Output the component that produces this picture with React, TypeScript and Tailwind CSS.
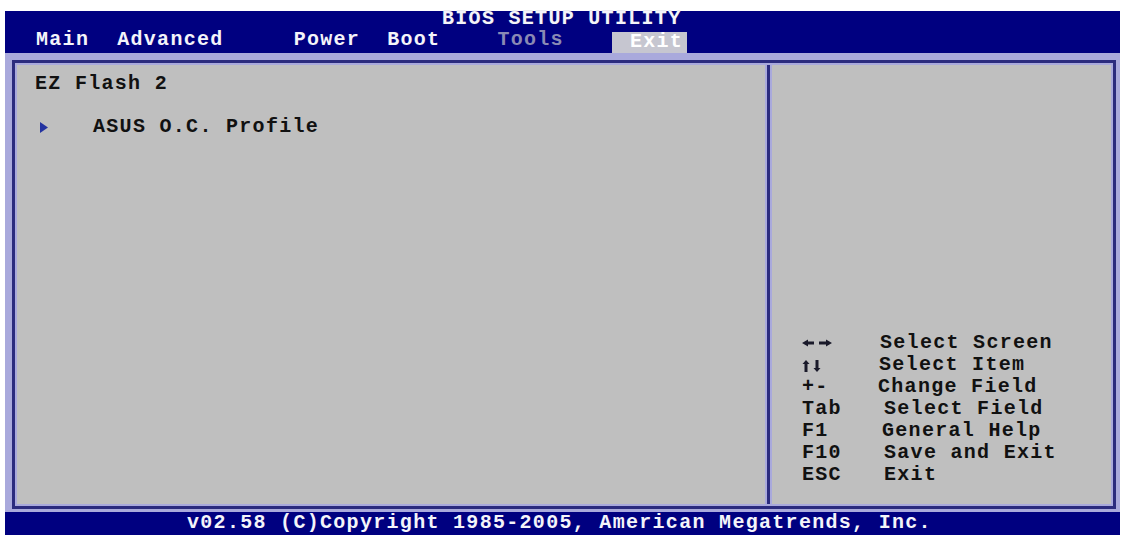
import React from "react";

const font = "font-['Liberation_Mono','DejaVu_Sans_Mono',monospace] font-bold text-[20px] tracking-[1.3px]";

function LR() {
  return (
    <svg width="30" height="8" viewBox="0 0 30 8" className="mt-[7px]">
      <path d="M0 4 L6 0.5 L6 2.5 L12 2.5 L12 5.5 L6 5.5 L6 7.5 Z" fill="#1a1a2a" />
      <path d="M30 4 L24 0.5 L24 2.5 L17 2.5 L17 5.5 L24 5.5 L24 7.5 Z" fill="#1a1a2a" />
    </svg>
  );
}

function UD() {
  return (
    <svg width="20" height="12" viewBox="0 0 20 12" className="mt-[6px]">
      <path d="M4 0 L7.5 4 L5.5 4 L5.5 12 L2.5 12 L2.5 4 L0.5 4 Z" fill="#1a1a2a" />
      <path d="M15 12 L18.5 8 L16.5 8 L16.5 0 L13.5 0 L13.5 8 L11.5 8 Z" fill="#1a1a2a" />
    </svg>
  );
}

const help: { key: React.ReactNode; desc: string; ml: string }[] = [
  { key: <LR />, desc: "Select Screen", ml: "ml-[2px]" },
  { key: <UD />, desc: "Select Item", ml: "ml-[1px]" },
  { key: "+-", desc: "Change Field", ml: "ml-[0px]" },
  { key: "Tab", desc: "Select Field", ml: "ml-[6px]" },
  { key: "F1", desc: "General Help", ml: "ml-[4px]" },
  { key: "F10", desc: "Save and Exit", ml: "ml-[6px]" },
  { key: "ESC", desc: "Exit", ml: "ml-[6px]" },
];

export default function App() {
  return (
    <div className={`w-[1123px] h-[535px] bg-white pt-[11px] pl-[5px] overflow-hidden ${font}`}>
      <div className="w-[1115px] flex flex-col">
        {/* Header */}
        <div className="h-[42px] bg-[#000080] text-[#f4f4fa] flex flex-col">
          <div className="-mt-[2px] h-5 leading-5 pl-[437px] whitespace-pre [text-shadow:0_0_1px_#303070]">
            BIOS SETUP UTILITY
          </div>
          <div className="mt-[1px] h-[23px] flex items-start pl-[31px] leading-5 whitespace-pre">
            <span>Main</span>
            <span className="ml-[28px]">Advanced</span>
            <span className="ml-[70px]">Power</span>
            <span className="ml-[27px]">Boot</span>
            <span className="ml-[57px] text-[#8a8ab4]">Tools</span>
            <div className="ml-[48px] mt-[2px] h-[21px] w-[75px] bg-[#c6c6d0] pl-[18px] text-white">
              Exit
            </div>
          </div>
        </div>

        {/* Body */}
        <div className="bg-[#a9a9dc] pl-[7px] pr-[4px] pt-[7px] pb-[3px]">
          <div className="border-[3px] border-[#2b2b7e] bg-[#a9a9dc] p-[2px] flex h-[449px]">
            <div className="w-[748px] h-full bg-[#bfbfbf] text-[#111111] pl-[18px] pt-[8px] leading-[22px]">
              <div>EZ Flash 2</div>
              <div className="mt-[21px] flex items-center">
                <svg width="8" height="11" viewBox="0 0 8 11" className="ml-[5px]">
                  <path d="M0 0 L8 5.5 L0 11 Z" fill="#2433a0" />
                </svg>
                <span className="ml-[45px]">ASUS O.C. Profile</span>
              </div>
            </div>
            <div className="w-[7px] h-full px-[2px]">
              <div className="w-[3px] h-full bg-[#2b2b7e]" />
            </div>
            <div className="w-[339px] h-full bg-[#bfbfbf] text-[#111111] pl-[30px] pb-[18px] flex flex-col justify-end leading-[22px]">
              {help.map((h, i) => (
                <div key={i} className="flex h-[22px] whitespace-pre">
                  <div className="w-[76px] flex items-start">{h.key}</div>
                  <div className={h.ml}>{h.desc}</div>
                </div>
              ))}
            </div>
          </div>
        </div>

        {/* Footer */}
        <div className="h-[23px] bg-[#000080] text-[#f4f4fa] pl-[182px] leading-[22px] whitespace-pre">
          v02.58 (C)Copyright 1985-2005, American Megatrends, Inc.
        </div>
      </div>
    </div>
  );
}
